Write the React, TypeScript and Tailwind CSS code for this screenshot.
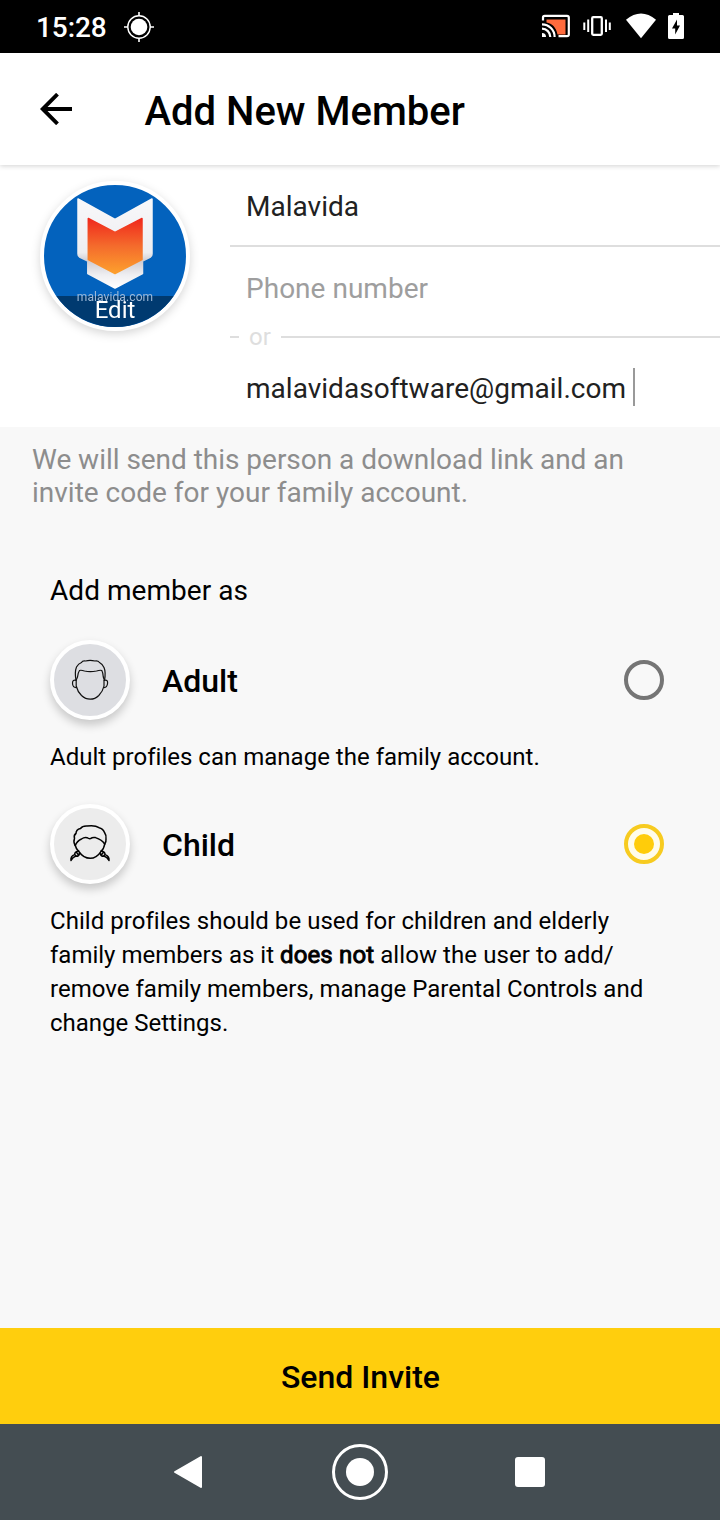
import type { ReactNode } from "react";

function StatusBar() {
  return (
    <div className="flex h-[53px] shrink-0 items-center bg-black text-white">
      <span className="ml-[36px] w-[87px] whitespace-nowrap pt-[2px] text-[28px] font-medium leading-[52px] tracking-[-0.1px]">15:28</span>
      <svg className="h-8 w-8" viewBox="0 0 32 32" fill="none" stroke="#fff">
        <circle cx="16" cy="16" r="8.3" fill="#fff" stroke="none" />
        <circle cx="16" cy="16" r="11.2" strokeWidth="1.4" />
        <path d="M16 1v4M16 27v4M1 16h4M27 16h4" strokeWidth="1.6" />
      </svg>
      <div className="flex-1" />
      <svg className="h-[53px] w-[180px]" viewBox="540 0 180 53" fill="none">
        <path d="M546.5 19.5H565.5V34.5H557.5C556 27 552 23.500 546.500 22.500Z" fill="#ff6b3d" />
        <path d="M543 20.500V17.500Q543 15.800 544.700 15.800H567Q568.800 15.800 568.800 17.500V34.500Q568.800 36.200 567 36.200H558.500" stroke="#fff" strokeWidth="2.200" />
        <path d="M542 24.300A12.600 12.600 0 0 1 554.600 37M542 28.700A8.300 8.300 0 0 1 550.300 37" stroke="#fff" strokeWidth="2.200" />
        <path d="M542 33A4 4 0 0 1 546 37H542Z" fill="#fff" />
        <rect x="592.200" y="17.200" width="9.600" height="17.600" rx="1" stroke="#fff" strokeWidth="2.300" />
        <path d="M584.300 22.500V30M588.200 19.500V32M606 19.500V32M609.800 22.500V30" stroke="#fff" strokeWidth="2" />
        <path d="M641 38.200L626 19.800Q641 7 656 19.800Z" fill="#fff" />
        <path d="M669.500 15H673V13H679V15H682.500Q684 15 684 16.500V37.500Q684 39 682.500 39H669.500Q668 39 668 37.500V16.500Q668 15 669.500 15Z" fill="#fff" />
        <path d="M677 19.500L672 28.500H675.200V34.500L680 25.500H677Z" fill="#000" />
      </svg>
    </div>
  );
}

function Header() {
  return (
    <header className="relative z-10 flex h-[112px] shrink-0 items-center bg-white shadow-[0_1px_5px_rgba(0,0,0,0.18)]">
      <svg className="ml-[40px] h-8 w-8" viewBox="0 0 32 32" fill="none" stroke="#000" strokeWidth="3.900">
        <path d="M32 16H3M17.500 1.200L2.700 16L17.500 30.800" />
      </svg>
      <h1 className="ml-[72.5px] mt-[6px] whitespace-nowrap text-[40px] font-medium leading-[48px]">Add New Member</h1>
    </header>
  );
}

function ProfilePhoto() {
  return (
    <div className="relative ml-[40px] mt-[16px] h-[150px] w-[150px] overflow-hidden rounded-full border-4 border-white bg-[#0362bd]">
      <svg className="h-[142px] w-[142px]" viewBox="44 185 142 142">
        <defs>
          <linearGradient id="emblem-fill" x1="0" y1="0" x2="0" y2="1">
            <stop offset="0" stopColor="#f0281c" />
            <stop offset="0.500" stopColor="#f46b2c" />
            <stop offset="1" stopColor="#fda02d" />
          </linearGradient>
          <linearGradient id="emblem-border" x1="0" y1="0" x2="0" y2="1">
            <stop offset="0" stopColor="#f8f8fa" />
            <stop offset="0.600" stopColor="#eeeef1" />
            <stop offset="0.700" stopColor="#cfccd2" />
            <stop offset="0.850" stopColor="#eeeef1" />
            <stop offset="1" stopColor="#ffffff" />
          </linearGradient>
        </defs>
        <path d="M78 199L115 219.500L152 199V254Q152 256 150.500 257L142.500 261V273.500L115 288L87.800 273.500V261L79.500 257Q78 256 78 254Z" fill="url(#emblem-border)" stroke="url(#emblem-border)" strokeWidth="1.500" strokeLinejoin="round" />
        <path d="M88.300 218.500L115 232.300L142 218.500V259.500L115 273.500L88.300 259.500Z" fill="url(#emblem-fill)" stroke="url(#emblem-fill)" strokeWidth="1.500" strokeLinejoin="round" />
      </svg>
      <div className="absolute left-0 top-[111px] h-[31px] w-[142px] bg-[#003a70]" />
      <span className="absolute left-0 top-[104px] w-[142px] text-center text-[12px] leading-[16px] tracking-[0.1px] text-[#9db9d8]">malavida.com</span>
      <span className="absolute left-0 top-[110px] w-[142px] text-center text-[24px] leading-[30px] text-white">Edit</span>
    </div>
  );
}

function MemberForm() {
  return (
    <section className="flex h-[262px] shrink-0 bg-white">
      <div className="w-[230px] shrink-0">
        <div className="[filter:drop-shadow(0_3px_5px_rgba(0,0,0,0.16))]">
          <ProfilePhoto />
        </div>
      </div>
      <div className="flex-1 whitespace-nowrap text-[28px] tracking-[0.02px] text-[#212121]">
        <div className="h-[82px] border-b-2 border-[#dedede] pl-[16px] leading-[84px]">Malavida</div>
        <div className="h-[74px] pl-[16px] leading-[84px] text-[#9e9e9e]">Phone number</div>
        <div className="flex h-[32px] items-center text-[24px] leading-[32px] text-[#dedede]">
          <span className="h-[2px] w-[9px] bg-[#dedede]" />
          <span className="w-[42px] pl-[10px]">or</span>
          <span className="h-[2px] flex-1 bg-[#dedede]" />
        </div>
        <div className="flex h-[68px] items-center pl-[16px]">
          <span className="w-[387px] pt-[4px] leading-[68px]">malavidasoftware@gmail.com</span>
          <span className="h-[38px] w-[2px] bg-[#999999]" />
        </div>
      </div>
    </section>
  );
}

function AdultFace() {
  return (
    <svg className="h-[72px] w-[72px]" viewBox="54 644 72 72" fill="none" stroke="#111" strokeWidth="1.200" strokeLinejoin="round">
      <path d="M76 680.500Q74.500 672 76.500 667Q78.500 663.500 81.500 662.500Q82.500 660.500 85.500 661Q90 659.800 95 661Q98 660.500 99.500 662.500Q102.500 664 104 667.500Q106 672 104.500 680.500" />
      <path d="M76 680.500L77.500 677Q78 672.500 79.500 670.500Q81 669.800 84.500 671Q90 672.300 96.500 671Q100.500 669.800 101.800 670.500Q103 672.500 103.300 677L104.500 680.500" />
      <path d="M76.200 680.300Q72.500 679.500 72.500 683Q72.500 688 76.800 687.500M104.300 680.300Q107.800 679.500 107.600 683Q107.200 688 103.500 687.500M76.200 680V686Q77.500 691.500 81.500 695.500Q85.500 699.200 90.200 699.200Q95 699.200 98.800 695.500Q103 691 104 686V680" />
    </svg>
  );
}

function ChildFace() {
  return (
    <svg className="h-[72px] w-[72px]" viewBox="54 808 72 72" fill="none" stroke="#000" strokeWidth="1.500" strokeLinejoin="round" strokeLinecap="round">
      <path d="M75.300 845.500Q73 842 74.500 838.500Q73.500 835 76 833.500Q76 829.500 80.500 828.500Q82.500 825.700 87 826Q95 824.800 99 827.700Q103 828.500 104.500 832.500Q106.700 835.500 106 839Q106.300 842 104.700 844" />
      <path d="M75.300 845.500Q77 841 81.500 839Q84 837.200 87 837.700Q89 839 90.500 838.600Q92.500 837 95.500 837.600Q102 839.700 104.700 844" />
      <path d="M75.300 845.500Q76 849 79 851.800Q83.500 858.300 90.200 858.300Q96.500 858.300 100.700 851.800Q104 849 104.700 844" />
      <path d="M78.800 851Q74.500 851.500 74.700 854.600Q70.300 856 71 860.500M79.500 853.500Q78.800 856.800 75.500 856.300Q73 857 71 860.500M74.700 854.600L76.500 856.300M76.500 852.200L78.500 855" />
      <path d="M101 851Q105.300 851.500 105 854.600Q109.500 856 109 860.500M100.200 853.500Q101 856.800 104.300 856.300Q107 857 109 860.500M105 854.600L103.300 856.300M103.300 852.200L101.300 855" />
    </svg>
  );
}

type MemberOptionProps = { name: string; face: ReactNode; faceBg: string; selected: boolean };

function MemberOption({ name, face, faceBg, selected }: MemberOptionProps) {
  return (
    <div className="flex h-[80px] items-center pl-[50px] pr-[56px]">
      <div className={`h-[80px] w-[80px] rounded-full border-4 border-white shadow-[0_5px_10px_rgba(0,0,0,0.2)] ${faceBg}`}>{face}</div>
      <span className="ml-[32px] mt-[2px] text-[32px] font-medium leading-[40px]">{name}</span>
      <div className="flex-1" />
      {selected ? (
        <div className="flex h-[40px] w-[40px] items-center justify-center rounded-full border-4 border-[#f7cb20] bg-[#fffcea]">
          <span className="h-[20px] w-[20px] rounded-full bg-[#ffcc0a]" />
        </div>
      ) : (
        <div className="h-[40px] w-[40px] rounded-full border-4 border-[#757575]" />
      )}
    </div>
  );
}

function NavBar() {
  return (
    <nav className="flex h-[96px] shrink-0 items-center bg-[#444d52]">
      <svg className="ml-[172px] h-9 w-8" viewBox="0 0 32 36">
        <path d="M3 18L29 3V33Z" fill="#fff" stroke="#fff" strokeWidth="2" strokeLinejoin="round" />
      </svg>
      <div className="ml-[128px] flex h-[56px] w-[56px] items-center justify-center rounded-full border-[3px] border-white">
        <span className="h-[28px] w-[28px] rounded-full bg-white" />
      </div>
      <span className="ml-[127px] h-[30px] w-[30px] rounded-[3px] bg-white" />
    </nav>
  );
}

export default function App() {
  return (
    <div className="flex h-[1520px] w-[720px] flex-col overflow-hidden bg-[#f8f8f8] font-['Roboto',sans-serif] text-black">
      <StatusBar />
      <Header />
      <MemberForm />
      <main className="flex-1">
        <p className="whitespace-nowrap pl-[32px] pt-[16px] text-[28px] leading-[33px] tracking-[-0.03px] text-[#8d8d8d]">
          We will send this person a download link and an
          <br />
          <span className="tracking-normal">invite code for your family account.</span>
        </p>
        <h2 className="mt-[62px] pl-[50px] text-[28px] leading-[40px] tracking-[0.05px]">Add member as</h2>
        <div className="mt-[29px]">
          <MemberOption name="Adult" face={<AdultFace />} faceBg="bg-[#dddee2]" selected={false} />
          <p className="mt-[20px] whitespace-nowrap pl-[50px] text-[24px] leading-[34px] tracking-[0.01px]">Adult profiles can manage the family account.</p>
        </div>
        <div className="mt-[30px]">
          <MemberOption name="Child" face={<ChildFace />} faceBg="bg-[#ececec]" selected />
          <p className="mt-[20px] whitespace-nowrap pl-[50px] text-[24px] leading-[34px]">
            <span className="tracking-[0.04px]">Child profiles should be used for children and elderly</span>
            <br />
            family members as it <b className="font-normal tracking-[0.15px] [-webkit-text-stroke:0.9px_#000]">does not</b> <span className="tracking-[0.08px]">allow the user to add/</span>
            <br />
            <span className="tracking-[0.02px]">remove family members, manage Parental Controls and</span>
            <br />
            change Settings.
          </p>
        </div>
      </main>
      <button className="h-[96px] shrink-0 bg-[#ffce0d] pl-px pt-[2px] text-[32px] font-medium leading-[94px]">Send Invite</button>
      <NavBar />
    </div>
  );
}
